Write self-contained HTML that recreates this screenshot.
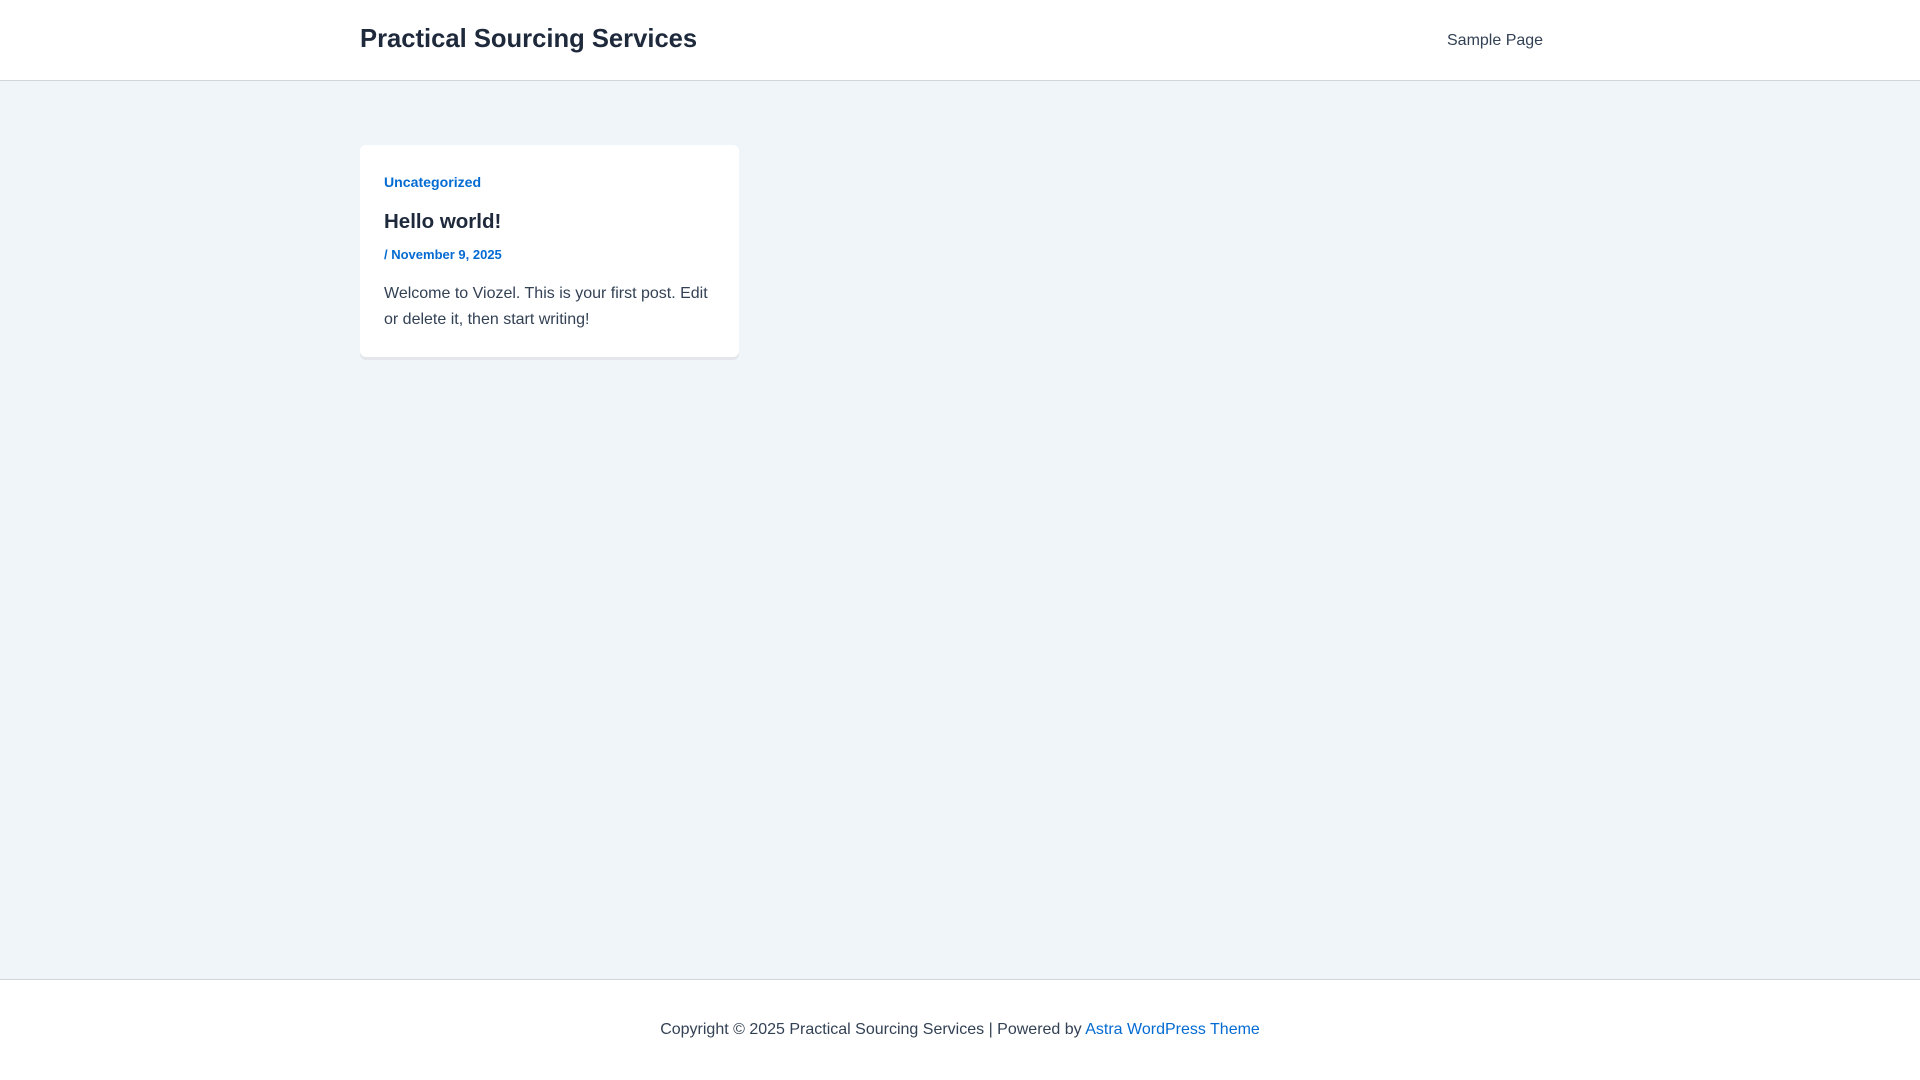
<!DOCTYPE html>
<html><head><meta charset="utf-8"><style>
*{margin:0;padding:0;box-sizing:border-box}
body{width:1920px;height:1080px;background:#f0f5fa;font-family:"Liberation Sans",sans-serif;position:relative;overflow:hidden}
.hdr{position:absolute;left:0;top:0;width:1920px;height:81px;background:#fff;border-bottom:1px solid #d1d5db}
.title{position:absolute;left:360px;top:22px;font-size:25.6px;font-weight:bold;color:#1e293b;line-height:34px}
.nav{position:absolute;left:1447px;top:31px;font-size:16px;color:#334155;line-height:20px}
.card{position:absolute;left:360px;top:145px;width:379px;height:212px;background:#fff;border-radius:6px;box-shadow:0 3px 0 #e3e7ec}
.cat{position:absolute;left:24px;top:29px;font-size:14.1px;font-weight:bold;color:#046bd2}
.h{position:absolute;left:24px;top:65px;font-size:20.5px;font-weight:bold;color:#1e293b}
.date{position:absolute;left:24px;top:102px;font-size:13px;font-weight:bold;color:#046bd2}
.txt{position:absolute;left:24px;top:136px;width:340px;font-size:16px;line-height:26px;color:#334155}
.ftr{position:absolute;left:0;top:979px;width:1920px;height:101px;background:#fff;border-top:1px solid #d1d5db}
.ft{position:absolute;left:0;top:41px;width:1920px;text-align:center;font-size:16px;color:#334155}
.ft a{color:#046bd2;text-decoration:none}
</style></head><body>
<div class="hdr"><div class="title">Practical Sourcing Services</div><div class="nav">Sample Page</div></div>
<div class="card">
<div class="cat">Uncategorized</div>
<div class="h">Hello world!</div>
<div class="date">/ November 9, 2025</div>
<div class="txt">Welcome to Viozel. This is your first post. Edit or delete it, then start writing!</div>
</div>
<div class="ftr"><div class="ft">Copyright © 2025 Practical Sourcing Services | Powered by <a>Astra WordPress Theme</a></div></div>
</body></html>
